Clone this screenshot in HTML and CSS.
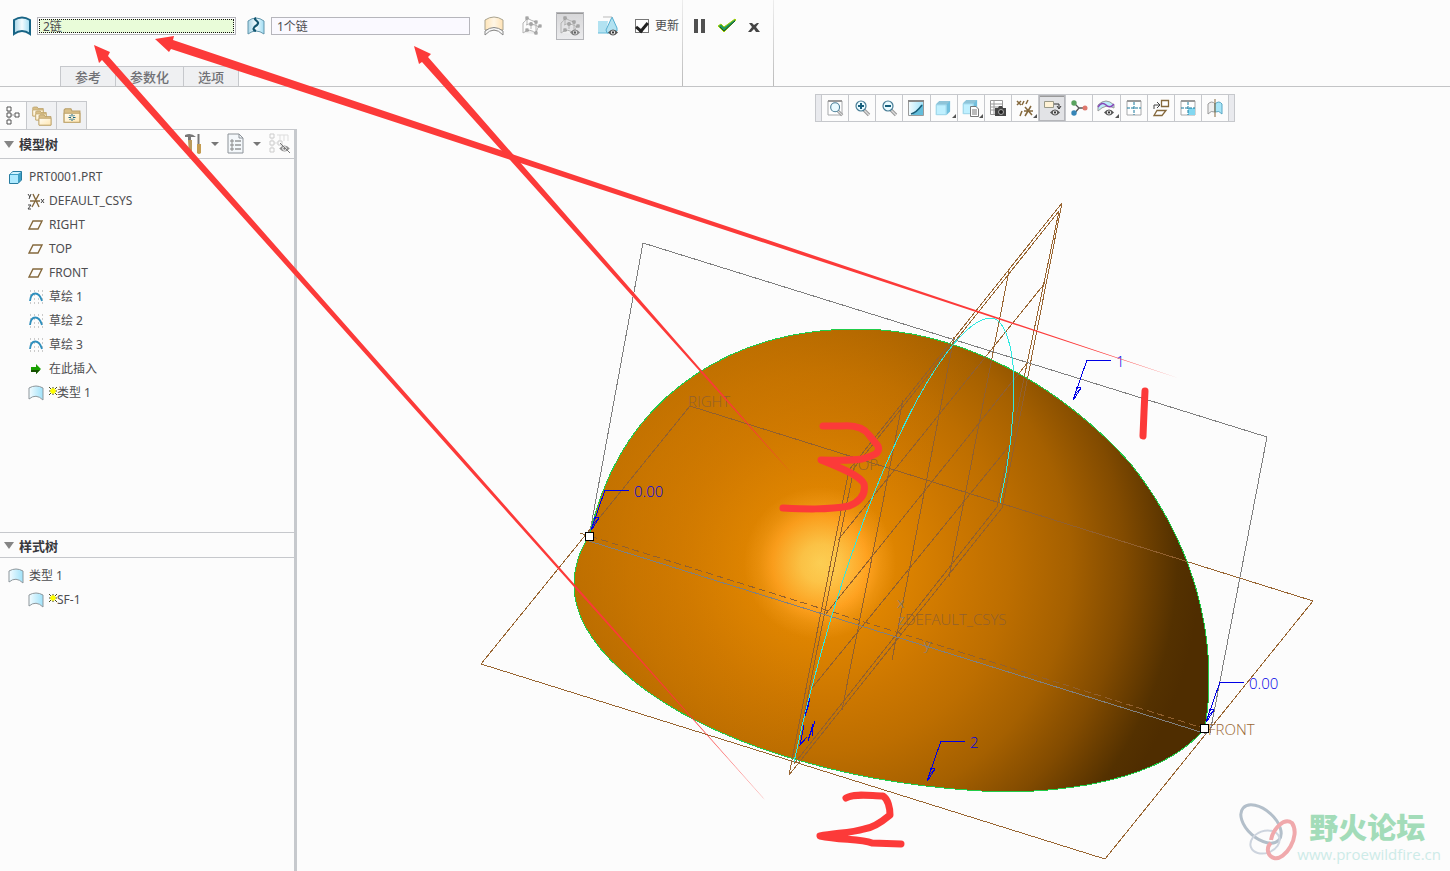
FILE: index.html
```html
<!DOCTYPE html>
<html lang="zh-CN">
<head>
<meta charset="utf-8">
<title>PRT0001.PRT</title>
<link rel="stylesheet" href="styles.css">
</head>
<body>
<svg class="defs" width="0" height="0" aria-hidden="true">
  <defs>
    <linearGradient id="sheet" x1="0" x2="1"><stop offset="0" stop-color="#f4fcff"/><stop offset="1" stop-color="#9fe2fa"/></linearGradient>
    <linearGradient id="steel" x1="0" x2="1"><stop offset="0" stop-color="#a6d4e6"/><stop offset=".5" stop-color="#f4fcff"/><stop offset="1" stop-color="#9fdcf2"/></linearGradient>
    <linearGradient id="sand" x1="0" x2="1"><stop offset="0" stop-color="#ffe5b8"/><stop offset=".5" stop-color="#fff6e6"/><stop offset="1" stop-color="#ffe2b4"/></linearGradient>
    <linearGradient id="paper" x1="0" x2="1" y2="1"><stop offset="0" stop-color="#fffdf5"/><stop offset="1" stop-color="#ffe6b0"/></linearGradient>
  </defs>
  <symbol id="i-surface" viewBox="0 0 16 16"><path d="M1 3Q8-1 15 3V15Q8 8 1 14Z" fill="url(#sheet)" stroke="#8e979c"/></symbol>
  <symbol id="i-plane" viewBox="0 0 16 16"><path d="M5 4H14L10 12H1Z" fill="none" stroke="#84683c" stroke-width="1.4"/></symbol>
  <symbol id="i-sketch" viewBox="0 0 16 16"><path d="M2 2h13M2 6h13M2 10h13M2 14h13" stroke="#999" stroke-dasharray="1 3" fill="none"/><path d="M2 12C3 2 11 2 14 12" fill="none" stroke="#2f8fbd" stroke-width="1.8"/></symbol>
  <symbol id="i-star" viewBox="0 0 8 8"><path d="M4 0V8M0 4H8M0 0L8 8M8 0L0 8" stroke="#4a4a20"/><path d="M4 1V7M1 4H7M2 2L6 6M6 2L2 6" stroke="#ff0" stroke-width="1.4"/></symbol>
  <symbol id="i-eye" viewBox="0 0 12 8"><path d="M0 4Q6-3 12 4Q6 11 0 4Z" fill="#555"/><circle cx="6" cy="4" r="2.5" fill="#fff"/><circle cx="6" cy="4" r="1.4" fill="#333"/></symbol>
  <symbol id="i-mesh" viewBox="0 0 20 20"><path d="M5 2Q10 5 14 6M4 9Q9 6 17 11M1 17Q8 11 14 18M5 2V9M14 6V17M9 6V13M1 7V17M1 7Q4 5 5 2M18 9Q15 12 14 17" fill="#eee" stroke="#b4b4b4"/><g fill="#fff" stroke="#888"><rect x="4" y="1" width="2" height="2"/><rect x="13" y="5" width="2" height="2"/><rect x="8" y="7" width="2" height="2"/><rect x="17" y="9" width="2" height="2"/><rect x="4" y="13" width="2" height="2"/><rect x="13" y="16" width="2" height="2"/></g></symbol>
  <symbol id="i-frame" viewBox="0 0 16 16"><path d="M1 1H15V15H1Z" fill="#fff" stroke="#a6a8aa"/><path d="M1 1H15" stroke="#999" stroke-width="2"/></symbol>
  <symbol id="i-lens" viewBox="0 0 18 18"><path d="M11 11L16 16" stroke="#999" stroke-width="3.4"/><path d="M11 11L16 16" stroke="#ddd" stroke-width="1.2"/><circle cx="8" cy="7" r="5" fill="#e9faff" stroke="#487d96" stroke-width="1.2"/></symbol>
  <symbol id="i-folder" viewBox="0 0 16 14"><path d="M1 4V2L2 1H7L8 3H15V13H1Z" fill="#d9bf88" stroke="#b9a06a"/><path d="M1 5H15V13H1Z" fill="url(#paper)" stroke="#c0a56c"/></symbol>
  <symbol id="i-cube" viewBox="0 0 18 18"><path d="M1 5L5 1H17V13L13 17H1Z" fill="#71bfdd"/><path d="M1 5H13V17H1Z" fill="#bff0ff"/><path d="M1 5L5 1H17L13 5Z" fill="#8fc4d8"/><path d="M1.500 5.500H12.500V16.500H1.500Z" fill="none" stroke="#9cd3e6"/></symbol>
</svg>

<header class="ribbon">
  <section class="dashboard">
    <div class="controls">
      <svg class="i20" viewBox="0 0 20 20"><path d="M2 4Q10-1 18 4V18Q10 12 2 18Z" fill="url(#steel)" stroke="#186485" stroke-width="2"/></svg>
      <input class="collector active" type="text" value="2链" aria-label="主曲线">
      <svg class="i20" viewBox="0 0 20 20"><path d="M2 5Q10-1 18 5V18Q10 12 2 18Z" fill="url(#steel)" stroke="#6296ac"/><path d="M10 2C6 4 15 5 11 9C6 12 7 14 10 15" fill="none" stroke="#12556e" stroke-width="2.2"/></svg>
      <input class="collector" type="text" value="1个链" aria-label="内部曲线">
      <button class="tool" aria-label="曲面"><svg class="i20" viewBox="0 0 20 20"><path d="M1 4Q10-2 19 4V14H1Z" fill="url(#sand)" stroke="#aaa38e"/><path d="M1 19V13Q3 16 1 19Q10 9 19 19V13Q10 17 1 13" fill="none"/><path d="M1 19V15Q10 8 19 15V19Q10 9 1 19Z" fill="#f8f8f8" stroke="#888"/></svg></button>
      <button class="tool" aria-label="网格"><svg class="i20"><use href="#i-mesh"/></svg></button>
      <button class="tool pressed" aria-label="显示网格"><svg class="i20"><use href="#i-mesh"/><use href="#i-eye" x="10" y="13" width="10" height="7" opacity=".65"/></svg></button>
      <button class="tool" aria-label="预览"><svg class="i20" viewBox="0 0 20 20"><path d="M0 5H10L8 17H0Z" fill="#b2e2f1"/><path d="M0 17H12" stroke="#65bad9"/><path d="M14 1L19 12V15L9 17L8 14Z" fill="#b2e2f1" stroke="#54aed0"/><path d="M5 1H14" stroke="#bbb"/><use href="#i-eye" x="10" y="13" width="10" height="7"/></svg></button>
      <label class="update"><input type="checkbox" checked>更新</label>
    </div>
    <nav class="tabs"><button>参考</button><button>参数化</button><button>选项</button></nav>
  </section>
  <section class="confirm">
    <button aria-label="暂停"><svg width="12" height="14" viewBox="0 0 12 14"><path d="M0 0H4V14H0ZM7 0H11V14H7Z" fill="#505050"/></svg></button>
    <button aria-label="确定"><svg width="20" height="14" viewBox="0 0 20 14"><path d="M1 7L4 5L7 8L18 0L19 1L7 13Z" fill="#229a5c" stroke="#a0cf00"/><path d="M3 8L7 12L18 2" fill="none" stroke="#145230"/></svg></button>
    <button aria-label="取消"><svg width="12" height="14" viewBox="0 0 12 14"><path d="M1 4H4L6 6L9 4H11L8 8L12 13H8L6 10L3 13H0L4 8Z" fill="#444"/></svg></button>
  </section>
</header>

<main class="work">
  <aside class="navigator">
    <nav class="nav-tabs">
      <button class="on" aria-label="模型树"><svg width="16" height="20" viewBox="0 0 16 20"><path d="M4 3V16M4 9H9" stroke="#999"/><path d="M2 1H6V5H2ZM2 7H6V11H2ZM2 14H6V18H2ZM10 7H14V11H10Z" fill="#fff" stroke="#555"/></svg></button>
      <button aria-label="文件夹"><svg width="20" height="20" viewBox="0 0 20 20"><use href="#i-folder" width="12" height="11"/><use href="#i-folder" x="3" y="4" width="12" height="11"/><use href="#i-folder" x="6" y="8" width="14" height="12"/></svg></button>
      <button aria-label="收藏夹"><svg width="18" height="18" viewBox="0 0 18 18"><use href="#i-folder" width="18" height="17"/><path d="M9 7V9M9 12V14M5.500 10.500H8M10 10.500H12.500M6.500 8L8 9.500M11.500 8L10 9.500M6.500 13L8 11.500M11.500 13L10 11.500" stroke="#166482"/></svg></button>
    </nav>
    <section class="panel model">
      <header class="panel-head"><i class="caret"></i><h2>模型树</h2>
        <span class="panel-tools">
          <button aria-label="设置"><svg width="20" height="22" viewBox="0 0 20 22"><path d="M2 2Q8-1 13 4H8V7H5V4H2Z" fill="#777"/><path d="M5 7H9V21H6Z" fill="#b99a5c"/><path d="M15 1H16V11H18V20Q16 22 14 20V11H15Z" fill="#c49c50"/><path d="M15.500 1V11" stroke="#777" stroke-width="2"/></svg></button>
          <i class="drop"></i>
          <button aria-label="显示"><svg width="18" height="22" viewBox="0 0 18 22"><path d="M1 1H12L16 5V20H1Z" fill="#f4f8fb" stroke="#8c9298"/><path d="M12 1V5H16" fill="none" stroke="#8c9298"/><path d="M8 8H14M8 12H14M8 16H14" stroke="#666"/><path d="M4 7h2v2H4zM4 11h2v2H4zM4 15h2v2H4z" fill="none" stroke="#888"/></svg></button>
          <i class="drop"></i>
          <button aria-label="隐藏" disabled><svg width="22" height="22" viewBox="0 0 22 22"><path d="M3 3V16M3 10H9M8 2H19M11 2V8M15 2V8M19 2V8" stroke="#ddd" fill="none"/><path d="M1 1H5V5H1ZM1 8H5V12H1ZM1 15H5V19H1ZM9 8H13V12H9Z" fill="#fcfcfc" stroke="#ccc"/><use href="#i-eye" x="10" y="12" width="11" height="7" opacity=".65"/><path d="M11 10L21 20" stroke="#777"/></svg></button>
        </span>
      </header>
      <ul class="tree">
        <li><svg class="i16"><path d="M1.500 5.500L5 2.500H13.500V11L10 14.500H1.500Z" fill="#3fa0c6" stroke="#287ca0"/><path d="M2 6H10V14H2Z" fill="#aeeaff"/><path d="M2 5L5 3H13L10 5Z" fill="#d2f4ff"/></svg><span>PRT0001.PRT</span></li>
        <li class="sub"><svg class="i16" viewBox="0 0 16 16"><path d="M5 1L11 14M11 1L4 14M2 8H12" stroke="#84683c" stroke-width="1.400"/><path d="M0 1L2 4M3 1L1 6M0 12H3L0 16H3M13 6L16 10M16 6L13 10" fill="none" stroke="#444"/></svg><span>DEFAULT_CSYS</span></li>
        <li class="sub"><svg class="i16"><use href="#i-plane"/></svg><span>RIGHT</span></li>
        <li class="sub"><svg class="i16"><use href="#i-plane"/></svg><span>TOP</span></li>
        <li class="sub"><svg class="i16"><use href="#i-plane"/></svg><span>FRONT</span></li>
        <li class="sub"><svg class="i16"><use href="#i-sketch"/></svg><span>草绘 1</span></li>
        <li class="sub"><svg class="i16"><use href="#i-sketch"/></svg><span>草绘 2</span></li>
        <li class="sub"><svg class="i16"><use href="#i-sketch"/></svg><span>草绘 3</span></li>
        <li class="sub"><svg class="i16" viewBox="0 0 16 16"><path d="M3 6H8V3L13 8L8 13V11H3Z" fill="#18a000"/><path d="M3 9H12L8 13V11H3Z" fill="#155000"/></svg><span>在此插入</span></li>
        <li class="sub"><svg class="i16"><use href="#i-surface"/></svg><span class="flag"><svg class="i8"><use href="#i-star"/></svg>类型 1</span></li>
      </ul>
    </section>
    <section class="panel styles">
      <header class="panel-head"><i class="caret"></i><h2>样式树</h2></header>
      <ul class="tree">
        <li><svg class="i16"><use href="#i-surface"/></svg><span>类型 1</span></li>
        <li class="sub"><svg class="i16"><use href="#i-surface"/></svg><span class="flag"><svg class="i8"><use href="#i-star"/></svg>SF-1</span></li>
      </ul>
    </section>
  </aside>

  <section class="viewport">
    <svg class="scene" viewBox="297 87 1153 784" preserveAspectRatio="xMinYMin meet">
      <defs>
        <radialGradient id="dome" gradientUnits="userSpaceOnUse" cx="820" cy="563" r="380">
          <stop offset="0" stop-color="#ffd55b"/><stop offset=".05" stop-color="#ffca4e"/><stop offset=".09" stop-color="#ffb536"/><stop offset=".125" stop-color="#ffa220"/><stop offset=".16" stop-color="#ec920e"/><stop offset=".2" stop-color="#de8400"/>
          <stop offset=".36" stop-color="#cc7700"/><stop offset=".5" stop-color="#bd6e00"/><stop offset=".66" stop-color="#a56000"/><stop offset=".8" stop-color="#824b00"/><stop offset=".94" stop-color="#543100"/><stop offset="1" stop-color="#4f2d00"/>
        </radialGradient>
        <linearGradient id="warm" gradientUnits="userSpaceOnUse" x1="620" y1="430" x2="880" y2="560"><stop offset="0" stop-color="#db8000" stop-opacity=".5"/><stop offset="1" stop-color="#db8000" stop-opacity="0"/></linearGradient>
        <path id="shell" d="M589 536C594 518 598 502 603 491C640 395 730 329 858 329C960 329 1060 385 1130 463C1180 525 1209 600 1209 680C1209 700 1207 715 1205 728C1170 772 1090 792 1000 792C900 788 820 769 760 748C640 705 574 640 574 585C574 565 580 550 589 536Z"/>
        <clipPath id="inside"><use href="#shell"/></clipPath>
        <g id="planes">
          <path d="M690 406L1313 601L1105 859L481 664Z"/>
          <path d="M1062 203L849 470L789 775L1002 508Z"/>
          <path d="M1059 211L854 468L794 764L997 507Z"/>
          <path d="M1009 271L949 577M954 337L892 660M903 400L842 710M1045 283L838 540M1028 362L825 615M1010 445L812 688"/>
        </g>
        <g id="leader" fill="none"><path d="M38 0H14L0 40M4 27L1 39M4 27L8 28L1 39M2 33L7 30"/></g>
      </defs>
      <g class="wire brown"><use href="#planes"/></g>
      <path class="wire gray" d="M589 537L643 243L1267 437L1210 733"/>
      <path d="M589 536L603 491L610 500L582 550Z" fill="#945800"/>
      <use href="#shell" fill="url(#dome)"/><use href="#shell" fill="url(#warm)"/>
      <use href="#shell" class="rim"/>
      <g class="wire dim" clip-path="url(#inside)"><use href="#planes"/></g>
      <path class="wire dim dashed" d="M580 533L1203 728"/>
      <path class="wire gray" d="M589 541L1207 734"/>
      <path class="wire cyan" d="M1000 503C1011 455 1014 415 1014 380C1013 345 1004 318 991 318C965 318 928 374 899 436C875 485 849 558 832 615C817 665 803 720 794 762"/>
      <g class="label dim-text"><text x="688" y="407">RIGHT</text><text x="850" y="470">TOP</text><text x="905" y="625">DEFAULT_CSYS</text></g>
      <g class="label axis"><text x="897" y="608">x</text><text x="898" y="625">z</text><text x="924" y="650">y</text></g>
      <g class="wire blue">
        <use href="#leader" x="591" y="490"/><use href="#leader" x="1206" y="682"/><use href="#leader" x="1073" y="360"/><use href="#leader" x="927" y="741"/>
        <path d="M810 698L805 716L809 704M804 725L800 745L807 737M815 721L808 741L813 724L812 736"/>
      </g>
      <g class="label blue-text"><text x="634" y="497">0.00</text><text x="1249" y="689">0.00</text><text x="1116" y="367">1</text><text x="970" y="748">2</text></g>
      <text class="label brown-text" x="1208" y="735">FRONT</text>
      <g class="handle"><rect x="585" y="532" width="8" height="8"/><rect x="1200" y="724" width="8" height="8"/></g>
    </svg>
    <nav class="viewbar">
      <button aria-label="重新调整"><svg class="i18"><use href="#i-frame" x="1" y="1" width="16" height="16"/><use href="#i-lens" x="2" y="2" width="16" height="16"/></svg></button>
      <button aria-label="放大"><svg class="i18"><use href="#i-lens"/><path d="M5 7H11M8 4V10" stroke="#165f7d" stroke-width="2"/></svg></button>
      <button aria-label="缩小"><svg class="i18"><use href="#i-lens"/><path d="M5 7H11" stroke="#165f7d" stroke-width="2"/></svg></button>
      <button aria-label="重画"><svg class="i18"><path d="M1.500 1.500H16.500V16.500H1.500Z" fill="url(#sheet)" stroke="#9a9a9a"/><path d="M1 2H17" stroke="#888" stroke-width="2"/><path d="M5 16L16 5V16Z" fill="#63bddb"/><path d="M4 15Q9 14 15 6" stroke="#185d78" fill="none" stroke-width="1.500"/></svg></button>
      <button class="more" aria-label="显示样式"><svg class="i18"><use href="#i-cube" width="16" height="18"/></svg></button>
      <button class="more" aria-label="已保存方向"><svg class="i18"><use href="#i-cube" width="16" height="16"/><path d="M8.500 7.500H14L16.500 10V17.500H8.500Z" fill="#fff" stroke="#777"/><path d="M10 11H15M10 13H15M10 15H15" stroke="#777"/></svg></button>
      <button aria-label="视图管理器"><svg class="i18"><path d="M1.500 1.500H13.500V15.500H1.500ZM1 5H14M1 8H14M1 11H14M5 1V16" fill="#fff" stroke="#999"/><path d="M6 9H9L10 7H13L14 9H17V17H6Z" fill="#444"/><circle cx="12" cy="13" r="2.500" fill="#222" stroke="#aaa"/></svg></button>
      <button class="more" aria-label="基准显示"><svg class="i18"><path d="M1 2L5 6M5 2L1 6M12 1L10 5M6 12L4 17M8 2L6 6M9 8L16 16M15 7L9 17M8 12H17" stroke="#84683c" stroke-width="1.500"/></svg></button>
      <button class="pressed" aria-label="注释显示"><svg class="i18"><path d="M1.500 2.500H10.500V8.500H1.500Z" fill="#fff2d5" stroke="#998"/><path d="M11 5H16V9M14 7L16 10L18 7" fill="none" stroke="#333"/><use href="#i-eye" x="7" y="10" width="10" height="7"/></svg></button>
      <button aria-label="旋转中心"><svg class="i18"><path d="M4 4L9 9L4 15M9 9H15" fill="none" stroke="#555" stroke-width="1.300"/><circle cx="4" cy="4" r="2.700" fill="#5aa35f"/><circle cx="4" cy="14" r="2.700" fill="#3685b7"/><circle cx="15" cy="9" r="2.500" fill="#de786d"/></svg></button>
      <button class="more" aria-label="分析显示"><svg class="i18"><path d="M1 6Q9-2 17 6V9Q9 4 1 12Z" fill="#bbecfb" stroke="#999"/><path d="M1 8Q5 2 9 6T17 5" fill="none" stroke="#8745b8" stroke-width="1.500"/><use href="#i-eye" x="7" y="10" width="10" height="7"/></svg></button>
      <button aria-label="四视图"><svg class="i18"><use href="#i-frame" x="1" y="1" width="16" height="16"/><path d="M9 3V16M2 9H16" stroke="#16789d" stroke-dasharray="3 1"/></svg></button>
      <button aria-label="活动平面方向"><svg class="i18"><path d="M9.500 1.500H16.500V7.500H9.500ZM5 11.500H14L10 16.500H2Z" fill="#fff" stroke="#84683c" stroke-width="1.300"/><path d="M2 10V6H7M5 3L8 6L5 9" fill="none" stroke="#444"/></svg></button>
      <button aria-label="活动视图"><svg class="i18"><use href="#i-frame" x="1" y="1" width="16" height="16"/><path d="M9 9H16V16H9Z" fill="#83d7f0"/><path d="M9 3V16M2 9H16" stroke="#16789d" stroke-dasharray="3 1"/></svg></button>
      <button aria-label="镜像"><svg class="i18"><path d="M2 5Q6 1 9 5V13Q5 11 2 15Z" fill="#eee" stroke="#999"/><path d="M9 5Q13 1 16 5V15Q13 11 9 13Z" fill="#a9e6f8" stroke="#58a7c4"/><path d="M9 0V18" stroke="#84683c"/></svg></button>
    </nav>
  </section>
</main>

<svg class="ink" viewBox="0 0 1450 871" preserveAspectRatio="xMinYMin meet" aria-hidden="true">
  <g fill="#fc3a39">
    <path d="M94 45L110 52L108 56L765 800L102 60L99 63Z"/>
    <path d="M155 39L174 36L173 40L1178 378L171 49L169 52Z"/>
    <path d="M414 46L431 54L428 57L793 475L422 62L419 64Z"/>
  </g>
  <g fill="none" stroke="#fc3a39" stroke-width="7" stroke-linecap="round" stroke-linejoin="round">
    <path d="M1145 391L1144 412L1143 436"/>
    <path d="M823 426H842C854 425 864 428 869 435L878 446C881 454 872 456 862 459C850 461 835 460 821 460C836 466 860 475 864 484C866 494 861 501 849 506C827 510 804 509 783 508"/>
    <path d="M846 798C855 793 871 796 883 796C888 799 890 808 890 815C884 820 874 828 864 829C851 833 835 833 820 836C840 840 861 839 872 843L901 844"/>
  </g>
</svg>

<footer class="watermark">
  <svg width="60" height="58" viewBox="0 0 60 58"><g fill="none"><ellipse cx="20" cy="19" rx="14" ry="24" transform="rotate(-48 20 19)" stroke="#b3bfca" stroke-width="3"/><ellipse cx="24" cy="37" rx="15" ry="11" transform="rotate(-20 24 37)" stroke="#cdd4de" stroke-width="2"/><path d="M30 35C32 24 43 12 51 18C60 31 44 56 33 53C26 51 25 42 30 38" stroke="#f0a9ac" stroke-width="4"/></g></svg>
  <p><strong>野火论坛</strong><span>www.proewildfire.cn</span></p>
</footer>
</body>
</html>
```
FILE: styles.css
```css
* { box-sizing: border-box; }

body {
  margin: 0;
  min-height: 100vh;
  display: flex;
  flex-direction: column;
  position: relative;
  background: #fcfcfc;
  color: #4d4d50;
  font: 12px/16px "Noto Sans", "Noto Sans CJK SC", sans-serif;
  overflow: hidden;
}
button, input { font: inherit; color: inherit; }
button { padding: 0; border: 0; background: none; display: flex; align-items: center; justify-content: center; }
svg { display: block; flex: none; overflow: visible; }
.defs { position: absolute; }
.i8 { width: 8px; height: 8px; }
.i16 { width: 16px; height: 16px; }
.i18 { width: 18px; height: 18px; }
.i20 { width: 20px; height: 20px; }

.ribbon { display: flex; height: 87px; border-bottom: 1px solid #c3c4c6; }
.dashboard, .confirm { border-right: 1px solid; border-image: linear-gradient(#eee, #bbb) 1; }
.dashboard { display: flex; flex-direction: column; justify-content: space-between; width: 683px; padding-top: 12px; }
.controls { display: flex; align-items: center; height: 28px; padding-left: 12px; }
.collector { width: 199px; height: 18px; margin: 0 10px 0 5px; padding: 0 5px; border: 1px solid #b6b6bc; background: #faf9ff; outline: 0; }
.collector.active { background: #e9fcd9; box-shadow: inset 0 0 0 1px #fff; outline: 1px dotted #111; outline-offset: -3px; }
.tool { width: 28px; height: 28px; margin-right: 10px; }
.pressed { background: linear-gradient(#d6d6d8, #ececee); box-shadow: inset 0 0 0 1px #b5b6ba, inset 0 2px #999; }
.update { display: flex; align-items: center; gap: 6px; white-space: nowrap; }
.update input {
  appearance: none;
  width: 14px;
  height: 14px;
  margin: 0 0 0 3px;
  border: 1px solid #777;
  background: #fff;
  display: grid;
  place-items: center;
}
.update input::before { content: ""; width: 5px; height: 9px; border: solid #222; border-width: 0 3px 3px 0; transform: rotate(40deg); }
.tabs { display: flex; padding-left: 60px; }
.tabs button { height: 20px; padding: 0 14px; border: solid #c6c8cc; border-width: 1px 0 0 1px; background: #eff0f2; font-size: 13px; font-weight: 500; color: #707075; }
.tabs button:last-child { border-right-width: 1px; }
.confirm { display: flex; align-items: flex-start; gap: 11px; width: 91px; padding: 19px 11px; }

.work { display: flex; flex: 1; }
.navigator { width: 297px; display: flex; flex-direction: column; padding-top: 14px; flex: none; }
.nav-tabs { display: flex; height: 28px; }
.nav-tabs button { width: 30px; background: #f0f1f3; border: solid #c6c8cc; border-width: 1px 1px 0 0; }
.nav-tabs .on { width: 27px; background: none; }
.panel { border-right: 3px solid #c6c9cd; border-top: 1px solid #c6c8cc; }
.model { flex: 403; }
.styles { flex: 339; }
.panel-head { display: flex; align-items: center; height: 29px; padding: 0 3px 0 4px; gap: 5px; border-bottom: 1px solid #c6c8cc; }
.styles .panel-head { height: 25px; padding-top: 2px; }
.panel-head h2 { margin: 0; font-size: 13px; line-height: 20px; color: #38383c; }
.caret { border: 5px solid transparent; border-top: 7px solid #858585; border-bottom: 0; }
.panel-tools { display: flex; align-items: center; gap: 8px; margin-left: auto; }
.drop { border: 4px solid transparent; border-top: 4px solid #777; border-bottom: 0; }
.tree { list-style: none; margin: 0; padding: 6px 8px; }
.tree li { display: flex; align-items: center; gap: 5px; height: 24px; }
.tree .sub { padding-left: 20px; }
.flag { display: flex; }
.flag svg { margin-top: 2px; }

.viewport { flex: 1; position: relative; min-width: 0; }
.scene { position: absolute; inset: 0; width: 100%; }
.viewbar { position: relative; display: flex; width: 420px; height: 28px; margin: 7px 0 0 518px; padding: 0 5px; border: 1px solid #c6c8cc; background: #e9eaee; }
.viewbar button { flex: 1; position: relative; background: #fcfcfc; border-left: 1px solid #c6c8cc; }
.viewbar button:last-child { border-right: 1px solid #c6c8cc; }
.viewbar .pressed { background: #e2e3e6; }
.more::after { content: ""; position: absolute; right: 1px; bottom: 3px; border-left: 4px solid transparent; border-bottom: 4px solid #555; }

.wire { fill: none; stroke-width: 1; shape-rendering: crispEdges; }
.brown { stroke: #996633; }
.gray { stroke: #808080; }
.dim { stroke: #91602f; }
.dashed { stroke-dasharray: 7 4; }
.cyan { stroke: #30e8e0; }
.blue { stroke: #0000e6; }
.rim { fill: none; stroke: #20cc48; shape-rendering: crispEdges; }
.label { font: 300 15px "Open Sans", sans-serif; }
.dim-text { fill: #91602f; }
.axis { fill: #808080; }
.brown-text { fill: #996633; }
.blue-text { fill: #0000e6; }
.handle { fill: #fff; stroke: #000; shape-rendering: crispEdges; }

.ink { position: absolute; top: 0; left: 0; width: 100%; pointer-events: none; }
.watermark { position: absolute; right: 9px; bottom: 8px; display: flex; align-items: center; }
.watermark p { margin: 0 0 0 -4px; }
.watermark strong, .watermark span { display: block; }
.watermark strong { padding-left: 12px; font: 900 29px/40px "Noto Sans CJK SC", sans-serif; color: #a3dcb9; }
.watermark span { font: 15px/16px "Open Sans", sans-serif; color: #cdebe8; }
```
